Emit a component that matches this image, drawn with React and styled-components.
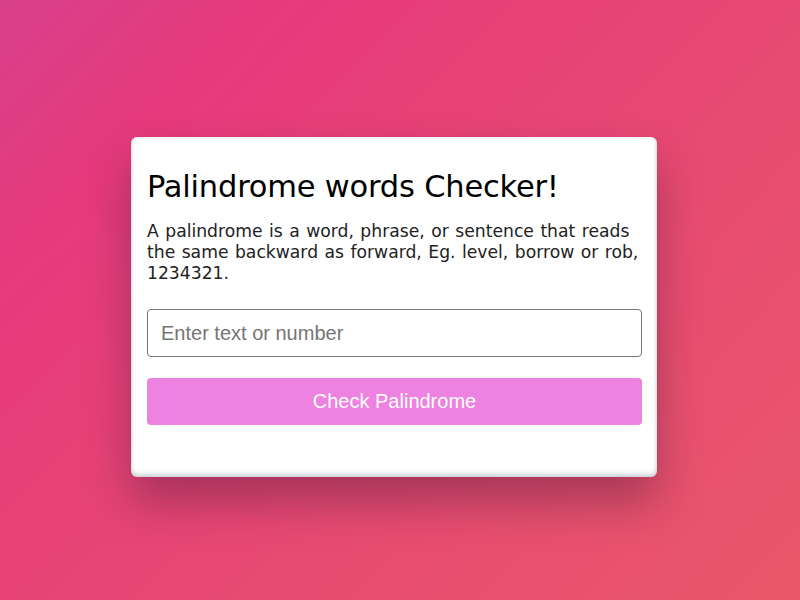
import styled, { createGlobalStyle } from "styled-components";

const GlobalStyle = createGlobalStyle`
  * {
    box-sizing: border-box;
  }
  body {
    margin: 0;
    font-family: "DejaVu Sans", sans-serif;
  }
`;

export default function App() {
  return (
    <>
      <GlobalStyle />
      <Page>
        <Card>
          <Title>Palindrome words Checker!</Title>
          <Description>
            A palindrome is a word, phrase, or sentence that reads the same
            backward as forward, Eg. level, borrow or rob, 1234321.
          </Description>
          <TextInput type="text" placeholder="Enter text or number" />
          <CheckButton>Check Palindrome</CheckButton>
        </Card>
      </Page>
    </>
  );
}

const Page = styled.main`
  width: 100%;
  height: 100vh;
  display: flex;
  align-items: center;
  justify-content: center;
  padding: 14px 12px 0 0;
  background: linear-gradient(135deg, #d8408a 0%, #e63a7c 20%, #e84a72 60%, #e9586a 100%);
`;

const Card = styled.section`
  width: 526px;
  padding: 32px 15px 52px 16px;
  background: #fff;
  border-radius: 6px;
  display: flex;
  flex-direction: column;
  box-shadow:
    inset 0 -3px 5px rgba(70, 90, 110, 0.25),
    inset 0 0 3px rgba(70, 90, 110, 0.15),
    0 25px 45px rgba(60, 20, 50, 0.38);
`;

const Title = styled.h1`
  margin: 0 0 17px;
  font-size: 30.5px;
  line-height: 35px;
  font-weight: 400;
  letter-spacing: -0.2px;
  color: #000;
`;

const Description = styled.p`
  margin: 0 0 25px;
  font-size: 17.2px;
  line-height: 21px;
  word-spacing: 1px;
  color: #222;
`;

const TextInput = styled.input`
  height: 48px;
  padding: 0 13px;
  border: 1px solid #767676;
  border-radius: 4px;
  font-family: "Liberation Sans", Arial, sans-serif;
  font-size: 20px;
  color: #333;
  outline: none;

  &::placeholder {
    color: #757575;
  }
`;

const CheckButton = styled.button`
  margin-top: 21px;
  height: 47px;
  border: none;
  border-radius: 4px;
  background: #ee82e0;
  color: #fff;
  font-family: "Liberation Sans", Arial, sans-serif;
  font-size: 20px;
  cursor: pointer;
`;
